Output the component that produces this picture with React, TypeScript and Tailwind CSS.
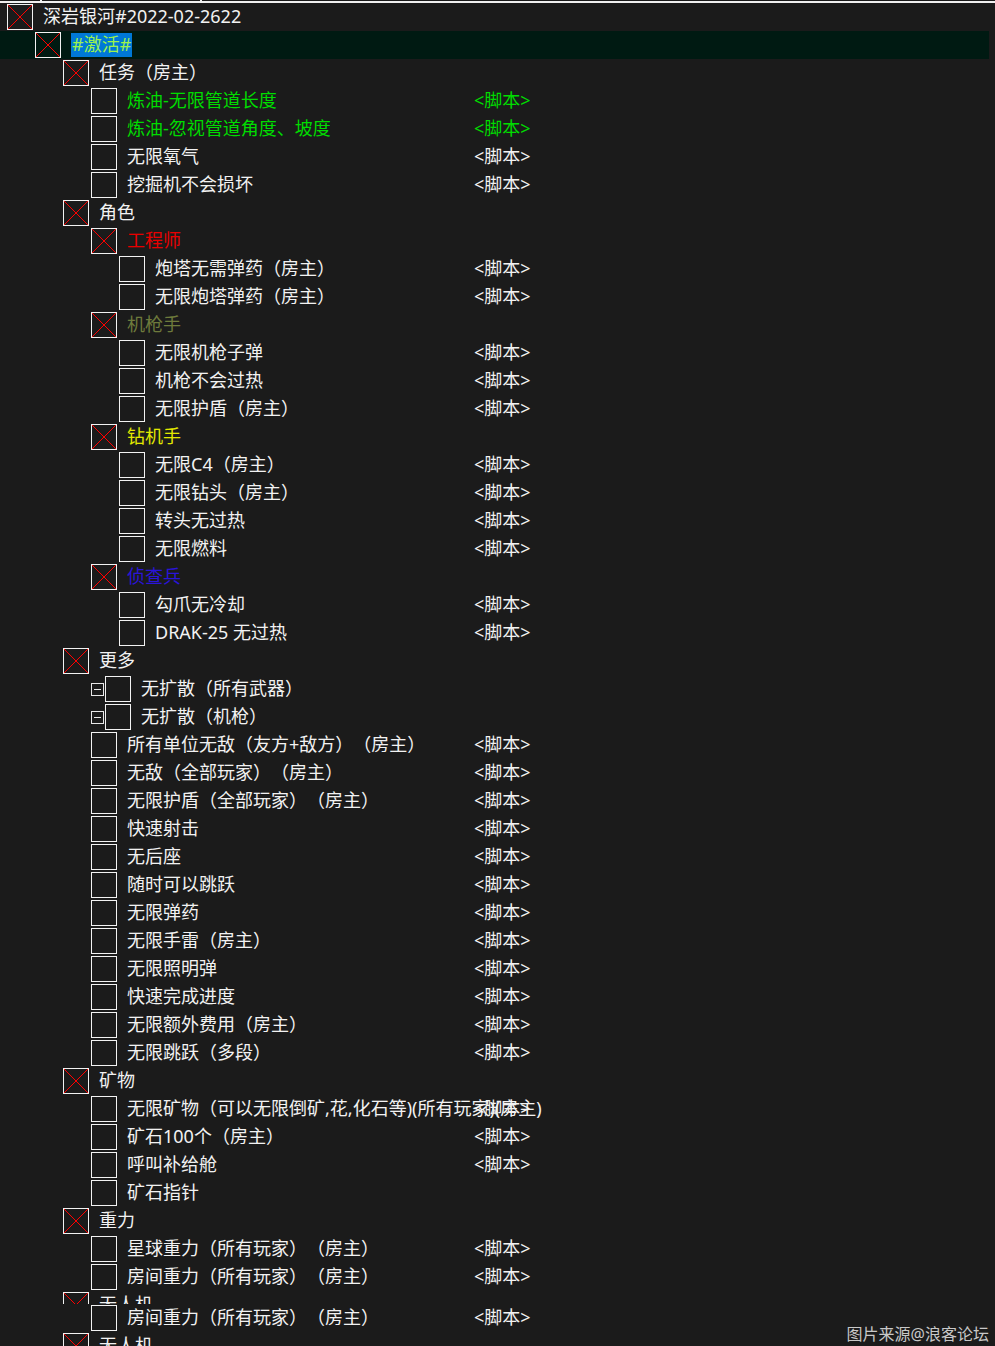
import React from "react";

type Row = {
  level: number;
  kind: "x" | "box" | "expand";
  text: string;
  color?: string;
  script?: boolean;
  scriptColor?: string;
  highlight?: boolean;
  clip?: boolean;
};

const G = "text-[#00dc00]";

const rows: Row[] = [
  { level: 0, kind: "x", text: "深岩银河#2022-02-2622" },
  { level: 1, kind: "x", text: "#激活#", highlight: true },
  { level: 2, kind: "x", text: "任务（房主）" },
  { level: 3, kind: "box", text: "炼油-无限管道长度", color: G, script: true, scriptColor: G },
  { level: 3, kind: "box", text: "炼油-忽视管道角度、坡度", color: G, script: true, scriptColor: G },
  { level: 3, kind: "box", text: "无限氧气", script: true },
  { level: 3, kind: "box", text: "挖掘机不会损坏", script: true },
  { level: 2, kind: "x", text: "角色" },
  { level: 3, kind: "x", text: "工程师", color: "text-[#e80000]" },
  { level: 4, kind: "box", text: "炮塔无需弹药（房主）", script: true },
  { level: 4, kind: "box", text: "无限炮塔弹药（房主）", script: true },
  { level: 3, kind: "x", text: "机枪手", color: "text-[#6e7a3c]" },
  { level: 4, kind: "box", text: "无限机枪子弹", script: true },
  { level: 4, kind: "box", text: "机枪不会过热", script: true },
  { level: 4, kind: "box", text: "无限护盾（房主）", script: true },
  { level: 3, kind: "x", text: "钻机手", color: "text-[#e2e800]" },
  { level: 4, kind: "box", text: "无限C4（房主）", script: true },
  { level: 4, kind: "box", text: "无限钻头（房主）", script: true },
  { level: 4, kind: "box", text: "转头无过热", script: true },
  { level: 4, kind: "box", text: "无限燃料", script: true },
  { level: 3, kind: "x", text: "侦查兵", color: "text-[#2a14d8]" },
  { level: 4, kind: "box", text: "勾爪无冷却", script: true },
  { level: 4, kind: "box", text: "DRAK-25 无过热", script: true },
  { level: 2, kind: "x", text: "更多" },
  { level: 3, kind: "expand", text: "无扩散（所有武器）" },
  { level: 3, kind: "expand", text: "无扩散（机枪）" },
  { level: 3, kind: "box", text: "所有单位无敌（友方+敌方）（房主）", script: true },
  { level: 3, kind: "box", text: "无敌（全部玩家）（房主）", script: true },
  { level: 3, kind: "box", text: "无限护盾（全部玩家）（房主）", script: true },
  { level: 3, kind: "box", text: "快速射击", script: true },
  { level: 3, kind: "box", text: "无后座", script: true },
  { level: 3, kind: "box", text: "随时可以跳跃", script: true },
  { level: 3, kind: "box", text: "无限弹药", script: true },
  { level: 3, kind: "box", text: "无限手雷（房主）", script: true },
  { level: 3, kind: "box", text: "无限照明弹", script: true },
  { level: 3, kind: "box", text: "快速完成进度", script: true },
  { level: 3, kind: "box", text: "无限额外费用（房主）", script: true },
  { level: 3, kind: "box", text: "无限跳跃（多段）", script: true },
  { level: 2, kind: "x", text: "矿物" },
  { level: 3, kind: "box", text: "无限矿物（可以无限倒矿,花,化石等)(所有玩家)(房主)", script: true },
  { level: 3, kind: "box", text: "矿石100个（房主）", script: true },
  { level: 3, kind: "box", text: "呼叫补给舱", script: true },
  { level: 3, kind: "box", text: "矿石指针" },
  { level: 2, kind: "x", text: "重力" },
  { level: 3, kind: "box", text: "星球重力（所有玩家）（房主）", script: true },
  { level: 3, kind: "box", text: "房间重力（所有玩家）（房主）", script: true },
  { level: 2, kind: "x", text: "无人机", clip: true },
  { level: 3, kind: "box", text: "房间重力（所有玩家）（房主）", script: true },
  { level: 2, kind: "x", text: "无人机" },
];

function XBox() {
  return (
    <div className="relative h-[26px] w-[26px] shrink-0 border border-[#f2f2f2]">
      <svg className="absolute inset-0" width="24" height="24" viewBox="0 0 24 24">
        <line x1="0" y1="0" x2="24" y2="24" stroke="#ff0000" strokeWidth="1" />
        <line x1="24" y1="0" x2="0" y2="24" stroke="#ff0000" strokeWidth="1" />
      </svg>
    </div>
  );
}

function EmptyBox() {
  return <div className="h-[26px] w-[26px] shrink-0 border border-[#f2f2f2]" />;
}

function Expander() {
  return (
    <div className="relative mr-[1px] flex h-[13px] w-[13px] shrink-0 items-center justify-center border border-[#e8e8e8]">
      <div className="h-px w-[7px] bg-[#e8e8e8]" />
    </div>
  );
}

function TreeRow({ r }: { r: Row }) {
  const indent = 7 + 28 * r.level;
  const textColor = r.color ?? "text-[#f2f2f2]";
  const outer = r.clip
    ? "flex h-[13px] w-full shrink-0 items-start overflow-hidden"
    : r.highlight
    ? "flex h-[28px] w-[989px] shrink-0 items-center bg-[#001a12]"
    : "flex h-[28px] w-full shrink-0 items-center";
  return (
    <div className={outer}>
      <div className="flex h-[28px] w-[474px] shrink-0 items-center whitespace-nowrap">
        <div style={{ width: indent }} className="shrink-0" />
        {r.kind === "expand" && <Expander />}
        {r.kind === "x" ? <XBox /> : <EmptyBox />}
        <div className="w-[10px] shrink-0" />
        {r.highlight ? (
          <span className="flex h-[24px] items-center bg-[#0078d7] px-[1px] pb-[2px] text-[#9cf24e]">{r.text}</span>
        ) : (
          <span className={"pb-[2px] " + textColor}>{r.text}</span>
        )}
      </div>
      {r.script && (
        <span className={"whitespace-nowrap pb-[2px] " + (r.scriptColor ?? "text-[#f2f2f2]")}>&lt;脚本&gt;</span>
      )}
    </div>
  );
}

export default function App() {
  return (
    <div className="relative h-[1346px] w-[995px] overflow-hidden bg-[#1b1b1b] font-['Noto_Sans','Noto_Sans_CJK_SC',sans-serif] text-[18px] leading-none [text-spacing-trim:space-all]">
      <div className="relative h-[3px] w-full border-b-2 border-[#f0f0f0]">
        <div className="absolute left-[40px] top-0 h-[3px] w-[2px] bg-[#f0f0f0]" />
        <div className="absolute left-[200px] top-0 h-[3px] w-[2px] bg-[#f0f0f0]" />
      </div>
      <div className="flex flex-col">
        {rows.map((r, i) => (
          <TreeRow key={i} r={r} />
        ))}
      </div>
      <div className="absolute bottom-[4px] right-[6px] text-[16px] text-[#c8c8c8]">图片来源@浪客论坛</div>
    </div>
  );
}
